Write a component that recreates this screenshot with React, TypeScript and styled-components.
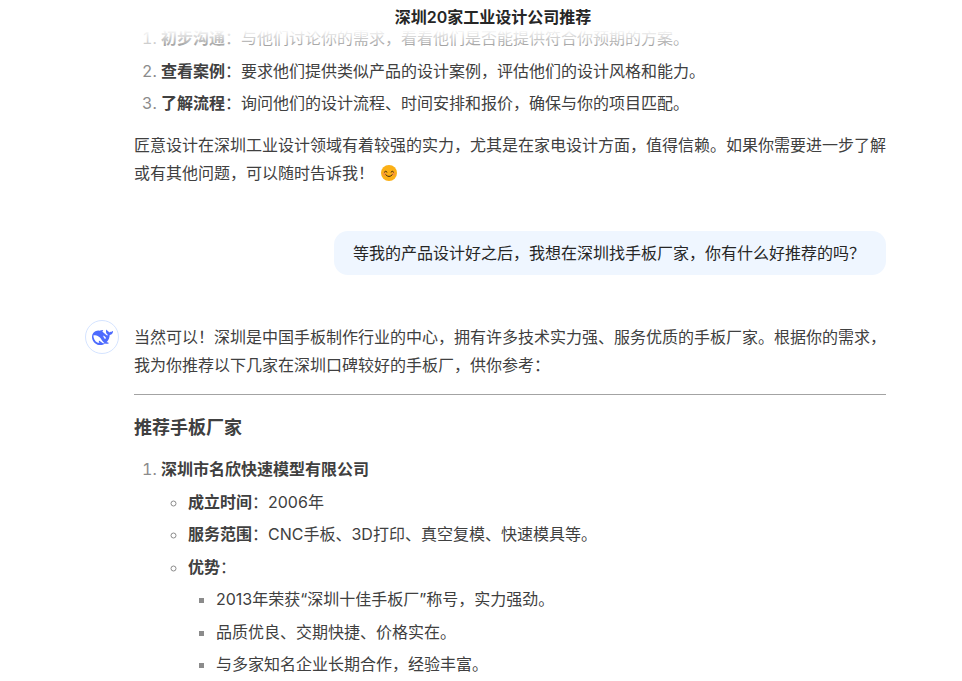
import React from "react";
import styled, { createGlobalStyle } from "styled-components";

const Global = createGlobalStyle`
  html, body { margin: 0; padding: 0; height: 100%; background: #fff; overflow: hidden; }
  #root { height: 100%; }
`;

const Page = styled.div`
  position: relative;
  width: 962px;
  height: 681px;
  overflow: hidden;
  background: #fff;
  color: #404040;
  font-family: Inter, "Noto Sans CJK SC", sans-serif;
  font-size: 16px;
  line-height: 28px;
`;

const Header = styled.header`
  position: absolute;
  top: 0;
  left: 0;
  right: 0;
  height: 46px;
  padding: 3px 0 0 24px;
  box-sizing: border-box;
  text-align: center;
  font-weight: 600;
  color: #262626;
  background: linear-gradient(to bottom, #fff 0%, #fff 65%, rgba(255, 255, 255, 0.5) 100%);
  z-index: 2;
`;

const Column = styled.main`
  width: 752px;
  margin-left: 134px;
  padding-top: 24px;
`;

const Ordered = styled.ol`
  margin: 0 0 14px;
  padding: 0 0 0 27px;
  li::marker { color: #8b8b8b; }
`;

const Item = styled.li`
  margin-bottom: 4.5px;
`;

const Para = styled.p`
  margin: 0;
`;

const Smile = styled.svg`
  width: 16px;
  height: 16px;
  margin-left: 7px;
  vertical-align: -2px;
`;

const UserRow = styled.div`
  display: flex;
  justify-content: flex-end;
  margin-top: 44px;
`;

const Bubble = styled.div`
  background: #eff6ff;
  border-radius: 14px;
  padding: 8px 21px 8px 19px;
  color: #262626;
`;

const Reply = styled.section`
  position: relative;
  margin-top: 48px;
`;

const Avatar = styled.div`
  position: absolute;
  left: -49px;
  top: -3px;
  width: 34px;
  height: 34px;
  box-sizing: border-box;
  border: 1px solid #d5e4ff;
  border-radius: 50%;
  display: flex;
  align-items: center;
  justify-content: center;
`;

const Rule = styled.hr`
  border: 0;
  border-top: 1px solid #a3a3a3;
  margin: 15px 0 17px;
`;

const Heading = styled.h3`
  margin: 0 0 11px;
  font-size: 18px;
  line-height: 32px;
  font-weight: 600;
`;

const Sub = styled.ul<{ $kind: "circle" | "square" }>`
  margin: 4.5px 0 0;
  padding: 0 0 0 ${(p) => (p.$kind === "square" ? 28 : 27)}px;
  list-style-type: ${(p) => p.$kind};
  li::marker { color: #8b8b8b; }
`;

const Strong = styled.strong`
  font-weight: 600;
`;

export default function App() {
  return (
    <Page>
      <Global />
      <Header>深圳20家工业设计公司推荐</Header>
      <Column>
        <Ordered>
          <Item><Strong>初步沟通</Strong>：与他们讨论你的需求，看看他们是否能提供符合你预期的方案。</Item>
          <Item><Strong>查看案例</Strong>：要求他们提供类似产品的设计案例，评估他们的设计风格和能力。</Item>
          <Item><Strong>了解流程</Strong>：询问他们的设计流程、时间安排和报价，确保与你的项目匹配。</Item>
        </Ordered>
        <Para>
          匠意设计在深圳工业设计领域有着较强的实力，尤其是在家电设计方面，值得信赖。如果你需要进一步了解或有其他问题，可以随时告诉我！
          <Smile viewBox="0 0 16 16" aria-hidden="true">
            <circle cx="8" cy="8" r="8" fill="#fbb016" />
            <circle cx="3.4" cy="9" r="1.7" fill="#f7963c" />
            <circle cx="12.6" cy="9" r="1.7" fill="#f7963c" />
            <path d="M3.4 7q1.300-1.800 2.600 0M10 7q1.300-1.800 2.600 0" fill="none" stroke="#3f2610" strokeWidth="1" strokeLinecap="round" />
            <path d="M4.800 9.800q3.200 3.600 6.400 0" fill="none" stroke="#3f2610" strokeWidth="1" strokeLinecap="round" />
          </Smile>
        </Para>
        <UserRow>
          <Bubble>等我的产品设计好之后，我想在深圳找手板厂家，你有什么好推荐的吗？</Bubble>
        </UserRow>
        <Reply>
          <Avatar>
            <svg width="21" height="21" viewBox="0 0 24 24" aria-hidden="true">
              <path
                fill="#4d6bfe"
                d="M23.748 4.482c-.254-.124-.364.113-.512.234-.051.039-.094.09-.137.136-.372.397-.806.657-1.373.626-.829-.046-1.537.214-2.163.848-.133-.782-.575-1.248-1.247-1.548-.352-.156-.708-.311-.955-.65-.172-.241-.219-.51-.305-.774-.055-.16-.11-.323-.293-.35-.2-.031-.278.136-.356.276-.313.572-.434 1.202-.422 1.84.027 1.436.633 2.58 1.838 3.393.137.093.172.187.129.323-.082.28-.18.552-.266.833-.055.179-.137.217-.329.14a5.526 5.526 0 01-1.736-1.18c-.857-.828-1.631-1.742-2.597-2.458a11.365 11.365 0 00-.689-.471c-.985-.957.13-1.743.388-1.836.27-.098.093-.432-.779-.428-.872.004-1.67.295-2.687.684a3.055 3.055 0 01-.465.137 9.597 9.597 0 00-2.883-.102c-1.885.21-3.39 1.102-4.497 2.623C.082 8.606-.231 10.684.152 12.85c.403 2.284 1.569 4.175 3.36 5.653 1.858 1.533 3.997 2.284 6.438 2.14 1.482-.085 3.133-.284 4.994-1.86.47.234.962.327 1.78.397.63.059 1.236-.03 1.705-.128.735-.156.684-.837.419-.961-2.155-1.004-1.682-.595-2.113-.926 1.096-1.296 2.746-2.642 3.392-7.003.05-.347.007-.565 0-.845-.004-.17.035-.237.23-.256a4.173 4.173 0 001.545-.475c1.396-.763 1.96-2.015 2.093-3.517.02-.23-.004-.467-.247-.588zM11.581 18c-2.089-1.642-3.102-2.183-3.52-2.16-.392.024-.321.471-.235.763.09.288.207.486.371.739.114.167.192.416-.113.603-.673.416-1.842-.14-1.897-.167-1.361-.802-2.5-1.86-3.301-3.307-.774-1.393-1.224-2.887-1.298-4.482-.02-.386.093-.522.477-.592a4.696 4.696 0 011.529-.039c2.132.312 3.946 1.265 5.468 2.774.868.86 1.525 1.887 2.202 2.891.72 1.066 1.494 2.082 2.48 2.914.348.292.625.514.891.677-.802.09-2.14.11-3.054-.614zm1-6.44a.306.306 0 01.415-.287.302.302 0 01.2.288.306.306 0 01-.31.307.303.303 0 01-.305-.308zm3.11 1.596c-.2.081-.399.151-.59.16a1.245 1.245 0 01-.798-.254c-.274-.23-.47-.358-.552-.758a1.73 1.73 0 01.016-.588c.07-.327-.008-.537-.239-.727-.187-.156-.426-.199-.688-.199a.559.559 0 01-.254-.078c-.11-.054-.2-.19-.114-.358.028-.054.16-.186.192-.21.356-.202.767-.136 1.146.016.352.144.618.408 1.001.782.391.451.462.576.685.914.176.265.336.537.445.848.067.195-.019.354-.25.452z"
              />
            </svg>
          </Avatar>
          <Para>当然可以！深圳是中国手板制作行业的中心，拥有许多技术实力强、服务优质的手板厂家。根据你的需求，我为你推荐以下几家在深圳口碑较好的手板厂，供你参考：</Para>
          <Rule />
          <Heading>推荐手板厂家</Heading>
          <Ordered>
            <li>
              <Strong>深圳市名欣快速模型有限公司</Strong>
              <Sub $kind="circle">
                <Item><Strong>成立时间</Strong>：2006年</Item>
                <Item><Strong>服务范围</Strong>：CNC手板、3D打印、真空复模、快速模具等。</Item>
                <Item>
                  <Strong>优势</Strong>：
                  <Sub $kind="square">
                    <Item>2013年荣获“深圳十佳手板厂”称号，实力强劲。</Item>
                    <Item>品质优良、交期快捷、价格实在。</Item>
                    <Item>与多家知名企业长期合作，经验丰富。</Item>
                  </Sub>
                </Item>
              </Sub>
            </li>
          </Ordered>
        </Reply>
      </Column>
    </Page>
  );
}
